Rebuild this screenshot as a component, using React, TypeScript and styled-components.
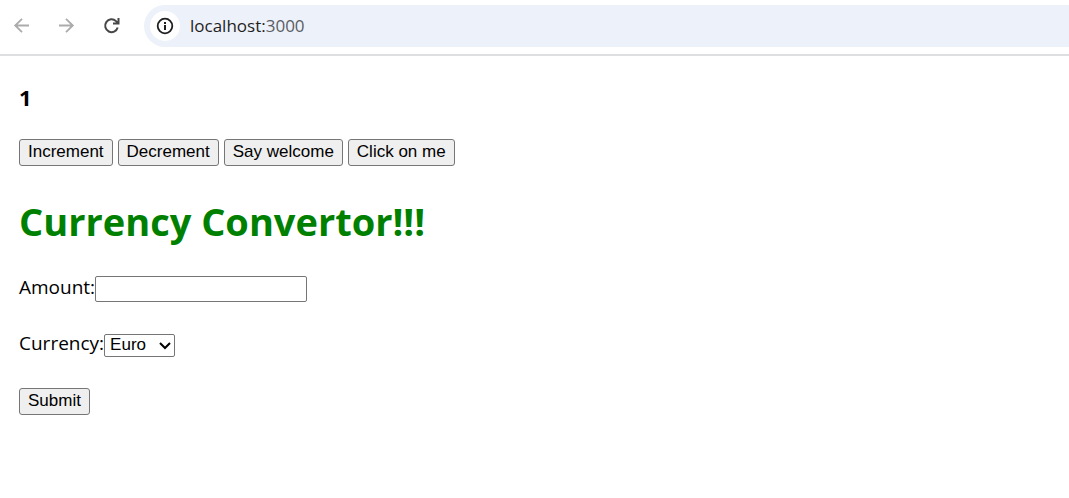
import React, { useState } from 'react';
import styled, { createGlobalStyle } from 'styled-components';

const GlobalStyle = createGlobalStyle`
  * { box-sizing: border-box; }
  body {
    margin: 0;
    background: #fff;
    color: #000;
    font-family: "Segoe UI", "Open Sans", sans-serif;
    font-size: 19px;
    line-height: 26px;
  }
`;

const Toolbar = styled.header`
  display: flex;
  align-items: center;
  height: 56px;
  padding: 5px 0 7px 11px;
  border-bottom: 2px solid #dedfe0;
`;

const NavButton = styled.button`
  display: flex;
  flex: none;
  margin-right: 23px;
  padding: 0;
  border: 0;
  background: none;
  color: #474747;

  &:disabled { color: #ababab; }
`;

const AddressBar = styled.div`
  display: flex;
  flex: 1;
  align-items: center;
  gap: 10px;
  min-width: 0;
  height: 42px;
  padding-left: 6px;
  border-radius: 21px 0 0 21px;
  background: #edf1fa;
`;

const SiteInfo = styled.button`
  display: flex;
  flex: none;
  align-items: center;
  justify-content: center;
  width: 30px;
  height: 30px;
  padding: 0;
  border: 0;
  border-radius: 50%;
  background: #fff;
  color: #1f1f1f;
`;

const Address = styled.span`
  color: #1f1f1f;
  font-size: 17px;
`;

const Port = styled.span`
  color: #5a5d63;
`;

const Page = styled.main`
  padding: 27px 19px;
`;

const Counter = styled.h3`
  margin: 0 0 28px;
  font-size: 22px;
  line-height: 28px;
`;

const ButtonRow = styled.div`
  display: flex;
  flex-wrap: wrap;
  gap: 5px;
`;

const Button = styled.button`
  height: 27px;
  padding: 0 8px 2px;
  border: 1px solid #767676;
  border-radius: 3px;
  background: #efefef;
  color: #000;
  font: 17px/24px Arial, "Liberation Sans", sans-serif;
`;

const Title = styled.h1`
  margin: 27px 0;
  color: #008000;
  font-size: 38px;
  line-height: 56px;
`;

const Form = styled.form`
  display: flex;
  flex-direction: column;
  align-items: flex-start;
  gap: 30px;
`;

const Field = styled.div`
  display: flex;
  align-items: center;
  height: 26px;
`;

const Label = styled.label`
  margin-top: -4px;
`;

const AmountInput = styled.input`
  width: 212px;
  height: 26px;
  padding: 1px 2px;
  border: 1px solid #767676;
  border-radius: 2px;
  font: 17px/22px Arial, "Liberation Sans", sans-serif;
`;

const SelectBox = styled.div`
  position: relative;
  display: flex;
`;

const Select = styled.select`
  appearance: none;
  width: 71px;
  height: 23px;
  padding: 0 20px 0 5px;
  border: 1px solid #767676;
  border-radius: 2px;
  background: #fff;
  color: #000;
  font: 17px/20px Arial, "Liberation Sans", sans-serif;
`;

const Chevron = styled.svg`
  position: absolute;
  top: 7px;
  right: 4px;
  pointer-events: none;
`;

export default function App() {
  const [count, setCount] = useState(1);
  const [amount, setAmount] = useState('');

  return (
    <>
      <GlobalStyle />
      <Toolbar>
        <NavButton type="button" aria-label="Back" disabled>
          <svg width="22" height="22" viewBox="0 0 22 22" fill="none" stroke="currentColor" strokeWidth="1.8">
            <path d="M18 10.5H4.2M11 3.8L4.2 10.5L11 17.2" />
          </svg>
        </NavButton>
        <NavButton type="button" aria-label="Forward" disabled>
          <svg width="22" height="22" viewBox="0 0 22 22" fill="none" stroke="currentColor" strokeWidth="1.8">
            <path d="M3 10.5H16.8M10 3.8L16.8 10.5L10 17.2" />
          </svg>
        </NavButton>
        <NavButton type="button" aria-label="Reload">
          <svg width="20" height="22" viewBox="0 0 20 22" fill="none" stroke="currentColor" strokeWidth="2">
            <path d="M16.7 12.5A6.4 6.4 0 1 1 15 6.1L16.7 7.9M17.5 3V8.5H12" />
          </svg>
        </NavButton>
        <AddressBar>
          <SiteInfo type="button" aria-label="View site information">
            <svg width="18" height="18" viewBox="0 0 18 18" fill="none" stroke="currentColor" strokeWidth="2">
              <circle cx="9" cy="9" r="7.3" strokeWidth="1.8" />
              <path d="M9 8V13M9 5V7" />
            </svg>
          </SiteInfo>
          <Address>localhost:<Port>3000</Port></Address>
        </AddressBar>
      </Toolbar>
      <Page>
        <Counter>{count}</Counter>
        <ButtonRow>
          <Button type="button" onClick={() => setCount(count + 1)}>Increment</Button>
          <Button type="button" onClick={() => setCount(count - 1)}>Decrement</Button>
          <Button type="button">Say welcome</Button>
          <Button type="button">Click on me</Button>
        </ButtonRow>
        <Title>Currency Convertor!!!</Title>
        <Form onSubmit={(event) => event.preventDefault()}>
          <Field>
            <Label htmlFor="amount">Amount:</Label>
            <AmountInput id="amount" value={amount} onChange={(event) => setAmount(event.target.value)} />
          </Field>
          <Field>
            <Label htmlFor="currency">Currency:</Label>
            <SelectBox>
              <Select id="currency" defaultValue="Euro">
                <option>Euro</option>
              </Select>
              <Chevron width="12" height="9" viewBox="0 0 12 9" fill="none" stroke="#000" strokeWidth="2">
                <path d="M1 2L6 7L11 2" />
              </Chevron>
            </SelectBox>
          </Field>
          <Button type="submit">Submit</Button>
        </Form>
      </Page>
    </>
  );
}
